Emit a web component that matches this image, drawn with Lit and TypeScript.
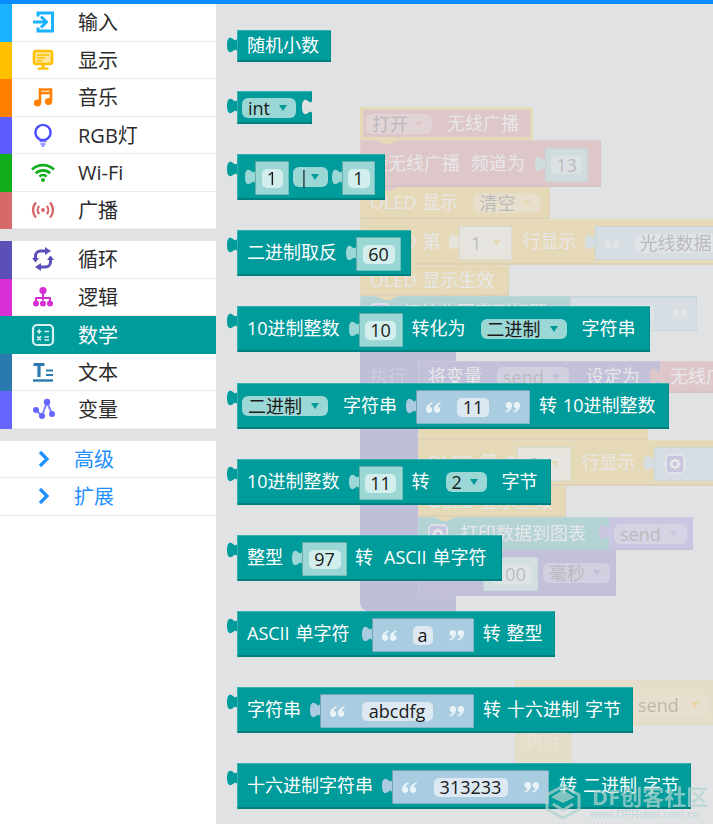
import { LitElement, html, css, svg } from "lit";
import { customElement } from "lit/decorators.js";

type Item =
  | { k: "t"; v: string; g: number }
  | { k: "n"; v: string; g: number; w: number; f: number }
  | { k: "d"; v: string; g: number; w: number }
  | { k: "s"; v: string; g: number; w: number; f: number }
  | { k: "nd"; v: string; g: number; w: number; f: number }
  | { k: "gear"; g: number; tab?: boolean };

interface Block {
  x: number; y: number; w: number; h: number; c: string;
  items: Item[]; notch?: boolean; bump?: boolean; hat?: boolean; tab?: boolean;
}

const OX = 216, OY = 4;
const t = (v: string, g = 10): Item => ({ k: "t", v, g });
const n = (v: string, g: number, w: number, f: number): Item => ({ k: "n", v, g, w, f });
const d = (v: string, g: number, w: number): Item => ({ k: "d", v, g, w });
const s = (v: string, g: number, w: number, f: number): Item => ({ k: "s", v, g, w, f });

const blocks: Block[] = [
  { x: 237, y: 30, w: 94, h: 32, c: "teal", tab: true, items: [t("随机小数")] },
  { x: 237, y: 91, w: 75, h: 33, c: "teal", tab: true, notch: true, items: [d("int", 5, 54)] },
  { x: 237, y: 154, w: 148, h: 46, c: "teal", tab: true, items: [n("1", 8, 34, 21), d("|", 4, 35), n("1", 4, 33, 22)] },
  { x: 237, y: 230, w: 174, h: 46, c: "teal", tab: true, items: [t("二进制取反"), n("60", 9, 45, 32)] },
  { x: 237, y: 306, w: 413, h: 46, c: "teal", tab: true, items: [t("10进制整数"), n("10", 9, 44, 31), t("转化为", 9), d("二进制", 15, 86), t("字符串", 15)] },
  { x: 237, y: 383, w: 432, h: 46, c: "teal", tab: true, items: [d("二进制", 5, 86), t("字符串", 15), s("11", 9, 114, 32), t("转 10进制整数", 9)] },
  { x: 237, y: 459, w: 314, h: 46, c: "teal", tab: true, items: [t("10进制整数"), n("11", 9, 44, 31), t("转", 9), d("2", 16, 41), t("字节", 15)] },
  { x: 237, y: 535, w: 265, h: 46, c: "teal", tab: true, items: [t("整型"), n("97", 9, 45, 32), t("转", 8), t("ASCII 单字符", 11)] },
  { x: 237, y: 611, w: 318, h: 46, c: "teal", tab: true, items: [t("ASCII 单字符"), s("a", 12, 102, 20), t("转 整型", 9)] },
  { x: 237, y: 687, w: 396, h: 46, c: "teal", tab: true, items: [t("字符串"), s("abcdfg", 9, 154, 71), t("转 十六进制 字节", 9)] },
  { x: 237, y: 763, w: 454, h: 46, c: "teal", tab: true, items: [t("十六进制字符串"), s("313233", 9, 157, 74), t("转 二进制 字节", 10)] },
];

const ghosts: Block[] = [
  { x: 360, y: 140, w: 241, h: 47, c: "pink", bump: true, items: [t("设无线广播"), t("频道为", 11), n("13", 10, 43, 31)] },
  { x: 360, y: 107, w: 173, h: 33, c: "pink", hat: true, bump: true, items: [d("打开", 3, 66), t("无线广播", 15)] },
  { x: 360, y: 187, w: 190, h: 32, c: "yellow", bump: true, items: [t("OLED 显示"), d("清空", 15, 67)] },
  { x: 360, y: 219, w: 370, h: 46, c: "yellow", bump: true, items: [t("OLED 第"), { k: "nd", v: "1", g: 9, w: 53, f: 40 }, t("行显示", 10), s("光线数据", 9, 160, 80)] },
  { x: 360, y: 265, w: 149, h: 31, c: "yellow", bump: true, items: [t("OLED 显示生效")] },
  { x: 360, y: 296, w: 337, h: 34, c: "teal", bump: true, items: [{ k: "gear", g: 10 }, t("初始化图表到标题", 13), s("呼吸", 13, 127, 40)] },
  { x: 418, y: 361, w: 242, h: 32, c: "purple", items: [t("将变量"), d("send", 15, 72), t("设定为", 17)] },
  { x: 660, y: 361, w: 70, h: 32, c: "pink", tab: true, items: [t("无线广")] },
  { x: 418, y: 393, w: 230, h: 47, c: "yellow", bump: true, items: [] },
  { x: 418, y: 440, w: 310, h: 46, c: "yellow", bump: true, items: [t("OLED 第"), { k: "nd", v: "2", g: 9, w: 54, f: 40 }, t("行显示", 10), { k: "gear", g: 9, tab: true }] },
  { x: 418, y: 486, w: 148, h: 31, c: "yellow", bump: true, items: [t("OLED 显示生效")] },
  { x: 418, y: 517, w: 191, h: 33, c: "teal", bump: true, items: [{ k: "gear", g: 10 }, t("打印数据到图表", 12)] },
  { x: 609, y: 517, w: 84, h: 33, c: "violet", tab: true, items: [d("send", 5, 73)] },
  { x: 418, y: 550, w: 198, h: 46, c: "purple", bump: true, items: [t("延时"), n("100", 9, 55, 42), d("毫秒", 5, 67)] },
];

const palette: Record<string, string> = { teal: "#009b9b", pink: "#d25f5f", yellow: "#fab90a", purple: "#4a40b0", violet: "#6a5cd8" };

const tabPath = "M10 2C9 4 8 3.500 6 2C3 -.5 0 1 0 8C0 15 3 16.500 6 14C8 12.500 9 12 10 14Z";

const icons: Record<string, unknown> = {
  input: svg`<g fill="none" stroke="#1ab2ff" stroke-width="3"><path d="M7 6.500V3H21.500V21H7V17.500"/><path d="M2 12H15"/><path d="M10 6.500L15.500 12L10 17.500"/></g>`,
  screen: svg`<rect x="3" y="3" width="18" height="13" rx="2" fill="#ffe59a" stroke="#ffc000" stroke-width="2.600"/><path d="M6 7h12M6 10h8M6 13h5" stroke="#ffc000" stroke-width="1.400"/><rect x="10.500" y="16" width="3" height="4" fill="#ffc000"/><rect x="6.500" y="19.500" width="11" height="2.200" fill="#ffc000"/>`,
  music: svg`<path d="M9 18V4.500H20V16" fill="none" stroke="#ff8000" stroke-width="2.600"/><path d="M9 8H20" stroke="#ff8000" stroke-width="2.600"/><circle cx="6.500" cy="18" r="3.600" fill="#ff8000"/><circle cx="17.500" cy="16.500" r="3.600" fill="#ff8000"/>`,
  bulb: svg`<circle cx="12" cy="9.500" r="7.600" fill="none" stroke="#4a4aff" stroke-width="2.400"/><path d="M8.500 18.500h7M9.500 21h5M10.500 23h3" stroke="#7a7aff" stroke-width="1.600"/>`,
  wifi: svg`<g fill="none" stroke="#0fae1a" stroke-width="2.600"><path d="M1 9.500A16 16 0 0 1 23 9.500"/><path d="M4.800 13.200A10.500 10.500 0 0 1 19.200 13.200"/><path d="M8.400 16.600A5.200 5.200 0 0 1 15.600 16.600"/></g><circle cx="12" cy="20" r="2" fill="#0fae1a"/>`,
  radio: svg`<circle cx="12" cy="12" r="1.900" fill="#d66a6a"/><g fill="none" stroke="#d66a6a" stroke-width="2.300"><path d="M8.200 8A6 6 0 0 0 8.200 16"/><path d="M15.800 8A6 6 0 0 1 15.800 16"/><path d="M5 4.500A11 11 0 0 0 5 19.500"/><path d="M19 4.500A11 11 0 0 1 19 19.500"/></g>`,
  loop: svg`<g fill="none" stroke="#5b50b8" stroke-width="3"><path d="M4.500 14V9A5 5 0 0 1 9.500 4H16"/><path d="M19.500 10V15A5 5 0 0 1 14.500 20H8"/></g><path d="M14 0L20 4L14 8ZM10 16L4 20L10 24ZM1 11H8L4.500 15.500ZM16 13H23L19.500 8.500Z" fill="#5b50b8"/>`,
  logic: svg`<circle cx="12" cy="5.500" r="3.600" fill="#d62fd6"/><path d="M12 8V15M5 18V13H19V18" fill="none" stroke="#d62fd6" stroke-width="2"/><circle cx="5" cy="18.500" r="3" fill="#d62fd6"/><circle cx="12" cy="18.500" r="3" fill="#d62fd6"/><circle cx="19" cy="18.500" r="3" fill="#d62fd6"/>`,
  math: svg`<rect x="2" y="2" width="20" height="20" rx="4" fill="none" stroke="#d9f2f1" stroke-width="2.200"/><path d="M6 8.500h4.500M8.200 6.200v4.600M13.500 8.500H18M13.500 14H18M13.500 17H18M6.200 13.400L10 17.200M10 13.400L6.200 17.200" stroke="#d9f2f1" stroke-width="1.600"/>`,
  text: svg`<path d="M2.500 4.500H13.500M8 4.500V17" fill="none" stroke="#2a7ab0" stroke-width="3.200"/><path d="M15 10.500H22M15 15H22" stroke="#2a7ab0" stroke-width="2"/><path d="M2 20.500H22" stroke="#2a7ab0" stroke-width="2.400"/>`,
  vars: svg`<path d="M5 13L11 19L16 5L21 17" fill="none" stroke="#8080ff" stroke-width="2"/><circle cx="5" cy="13" r="3" fill="#6666ff"/><circle cx="11" cy="19" r="3" fill="#6666ff"/><circle cx="16" cy="5" r="3.200" fill="#6666ff"/><circle cx="21" cy="17" r="3" fill="#6666ff"/>`,
  chev: svg`<path d="M9 5L16 12L9 19" fill="none" stroke="#1e90ff" stroke-width="3.200"/>`,
};

const groupA = [
  { l: "输入", i: "input", c: "#1ab2ff" },
  { l: "显示", i: "screen", c: "#ffc000" },
  { l: "音乐", i: "music", c: "#ff8000" },
  { l: "RGB灯", i: "bulb", c: "#5c5cff" },
  { l: "Wi-Fi", i: "wifi", c: "#0fae1a" },
  { l: "广播", i: "radio", c: "#d66a6a" },
];
const groupB = [
  { l: "循环", i: "loop", c: "#5b50b8" },
  { l: "逻辑", i: "logic", c: "#d62fd6" },
  { l: "数学", i: "math", c: "#009b9b", sel: true },
  { l: "文本", i: "text", c: "#2a7ab0" },
  { l: "变量", i: "vars", c: "#6666ff" },
];

@customElement("app-root")
export class AppRoot extends LitElement {
  static styles = css`
    :host { display: block; width: 713px; height: 824px; overflow: hidden; background: #e1e2e4;
      font-family: "Open Sans", "Noto Sans CJK SC", sans-serif; }
    .top { height: 4px; background: #0a8cff; }
    .main { display: flex; height: 820px; }
    .side { width: 216px; flex: none; background: #fff; display: flex; flex-direction: column; }
    .sep { height: 12px; flex: none; background: #e2e2e2; }
    .row { height: 37.500px; flex: none; box-sizing: border-box; display: flex; align-items: stretch;
      border-bottom: 1px solid #ececec; color: #2b2b2b; font-size: 20px; }
    .row.sel { background: #009b9b; color: #fff; border-bottom: 0; }
    .strip { width: 12px; flex: none; margin-bottom: -1px; }
    .icon { width: 24px; height: 24px; margin: auto 24px auto 19px; flex: none; display: block; }
    .label { align-self: center; line-height: 1; margin-top: 2px; margin-left: -1px; }
    .adv { color: #1e90ff; padding-left: 12px; }
    .adv .icon { margin-right: 20px; }
    .canvas { position: relative; flex: 1; overflow: hidden; }
    .ghosts { position: absolute; inset: 0; opacity: 0.2; }
    .ghosts.faint { opacity: 0.12; }
    .shape { position: absolute; background: #3f3aaa; }
    .shape.yel { background: #fab90a; }
    .block { position: absolute; box-sizing: border-box; display: flex; align-items: center;
      color: #fff; font-size: 18px; line-height: 1; white-space: pre; word-spacing: 1.300px;
      background: var(--c); box-shadow: inset 1px 1px 0 rgba(255,255,255,.2), inset 0 -2px 0 rgba(0,0,0,.18), inset -1px 0 0 rgba(0,0,0,.1); }
    .block.bare { background: transparent; box-shadow: none; }
    .tx { margin-bottom: 2px; }
    .teal { --c: #009b9b; --s: #9bd7d4; --f: #d3efed; --a: #009b9b; }
    .pink { --c: #d25f5f; --s: #87c3be; --f: #c8e6e4; --a: #d25f5f; }
    .yellow { --c: #fab90a; --s: #fff0c4; --f: #fff6dc; --a: #fab90a; }
    .purple { --c: #4a40b0; --s: #9bd7d4; --f: #d3efed; --a: #4a40b0; }
    .violet { --c: #6a5cd8; --s: #9bd7d4; --f: #d3efed; --a: #6a5cd8; }
    .pink .dd, .yellow .dd, .purple .dd, .violet .dd, .ghosts .teal .dd { background: #ffffff66; }
    .hat { border: 3px solid #fab90a; box-shadow: none; }
    .tab { position: absolute; left: -10px; top: 7px; width: 10px; height: 16px; display: block; }
    .notch { position: absolute; right: 0; top: 8px; width: 10px; height: 16px; display: block; }
    .bump { position: absolute; left: 16px; bottom: -4px; width: 22px; height: 4px; display: block; z-index: 1; }
    .hat .bump { left: 13px; bottom: -7px; }
    .slot { display: flex; flex: none; align-items: flex-start; margin-top: 2px; }
    .slot .stab { width: 10px; height: 16px; margin-top: 8px; flex: none; display: block; }
    .box { height: 34px; box-sizing: border-box; display: flex; align-items: center; justify-content: center;
      background: var(--s); box-shadow: inset 1px 1px 0 rgba(0,90,90,.35), inset -1px -1px 0 rgba(0,120,120,.25); }
    .box.str { background: #a9cce0; justify-content: space-between; padding: 0 10px; }
    .field { height: 19px; display: flex; align-items: center; justify-content: center;
      border-radius: 5px; background: var(--f); color: #1a1a1a; }
    .field.nd { justify-content: space-between; padding: 0 5px; box-sizing: border-box; }
    .str .field { background: #dde9f2; }
    .dd { height: 20px; box-sizing: border-box; flex: none; display: flex; align-items: center; justify-content: space-between;
      padding: 0 9px 0 6px; border-radius: 6px; background: #9bd7d4; color: #1a1a1a; }
    .dd.big { height: 22px; }
    .arrow { width: 8px; height: 6px; display: block; flex: none; }
    .quote { width: 15px; height: 11px; display: block; flex: none; }
    .gearwrap { display: block; height: 20px; }
    .gear { width: 20px; height: 20px; display: block; flex: none; }
    .gearbox { width: 70px; justify-content: flex-start; padding-left: 11px; background: #a9cce0; }
    .wm { position: absolute; right: 5px; bottom: 3px; width: 163px; height: 38px; color: rgba(178,212,208,.72); }
    .wm-icon { position: absolute; left: 0; top: 2px; width: 36px; height: 34px; display: block; }
    .wm-big { position: absolute; left: 47px; top: 1px; font-size: 22px; font-weight: 700; line-height: 24px; white-space: pre; }
    .wm-small { position: absolute; left: 45px; top: 25px; font-size: 11px; line-height: 13px; white-space: pre; font-family: "Liberation Sans", sans-serif; }
  `;

  private quote(right: boolean) {
    const c = svg`<path d="M6.300 .3C2.500 1.500 0 4.300 0 7.500C0 9.500 1.300 10.900 3.200 10.900C5 10.900 6.400 9.600 6.400 7.800C6.400 6 5.100 4.800 3.400 4.800C3.800 3.500 5 2.200 6.800 1.400Z"/>`;
    return html`<svg class="quote" viewBox="0 0 15 11" fill="#eaf3f8">
      <g transform=${right ? "rotate(180 7.500 5.500)" : ""}>${c}<g transform="translate(8 0)">${c}</g></g>
    </svg>`;
  }

  private arrow() {
    return html`<svg class="arrow" viewBox="0 0 8 6"><path d="M0 0H8L4 6Z" fill="var(--a)"/></svg>`;
  }

  private stab(fill: string) {
    return html`<svg class="stab" viewBox="0 0 10 16"><path d=${tabPath} fill=${fill}/></svg>`;
  }

  private gear() {
    return html`<svg class="gear" viewBox="0 0 20 20">
      <rect x="1" y="1" width="18" height="18" rx="4" fill="#5a50c8" stroke="#fff" stroke-width="1.500"/>
      <circle cx="10" cy="10" r="3.500" fill="none" stroke="#fff" stroke-width="2.500"/>
      <path d="M10 4.500v2M10 13.500v2M4.500 10h2M13.500 10h2M6.100 6.100l1.400 1.400M12.500 12.500l1.400 1.400M13.900 6.100l-1.400 1.400M7.500 12.500l-1.400 1.400" stroke="#fff" stroke-width="1.800"/>
    </svg>`;
  }

  private item(i: Item) {
    const ml = `margin-left:${i.g}px`;
    switch (i.k) {
      case "t":
        return html`<span class="tx" style=${ml}>${i.v}</span>`;
      case "n":
        return html`<span class="slot" style=${ml}>${this.stab("var(--s)")}
          <span class="box" style="width:${i.w}px"><span class="field" style="width:${i.f}px">${i.v}</span></span></span>`;
      case "nd":
        return html`<span class="slot" style=${ml}>${this.stab("var(--s)")}
          <span class="box" style="width:${i.w}px"><span class="field nd" style="width:${i.f}px">${i.v}${this.arrow()}</span></span></span>`;
      case "d":
        return html`<span class="dd" style="${ml};width:${i.w}px">${i.v}${this.arrow()}</span>`;
      case "s":
        return html`<span class="slot" style=${ml}>${this.stab("#a9cce0")}
          <span class="box str" style="width:${i.w}px">${this.quote(false)}<span class="field" style="width:${i.f}px">${i.v}</span>${this.quote(true)}</span></span>`;
      case "gear":
        return i.tab
          ? html`<span class="slot" style=${ml}>${this.stab("#a9cce0")}<span class="box gearbox">${this.gear()}</span></span>`
          : html`<span class="gearwrap" style=${ml}>${this.gear()}</span>`;
    }
  }

  private block(b: Block) {
    return html`<div class="block ${b.c} ${b.hat ? "hat" : ""}"
        style="left:${b.x - OX}px;top:${b.y - OY}px;width:${b.w}px;height:${b.h}px">
      ${b.tab ? html`<svg class="tab" viewBox="0 0 10 16"><path d=${tabPath} fill="var(--c)"/></svg>` : ""}
      ${b.items.map((i) => this.item(i))}
      ${b.notch ? html`<svg class="notch" viewBox="0 0 10 16"><path d=${tabPath} fill="#e1e2e4"/></svg>` : ""}
      ${b.bump ? html`<svg class="bump" viewBox="0 0 22 4"><path d="M0 0L8 4H14L22 0Z" fill=${b.hat ? palette.yellow : palette[b.c]}/></svg>` : ""}
    </div>`;
  }

  private row(r: { l: string; i: string; c: string; sel?: boolean }) {
    return html`<div class="row ${r.sel ? "sel" : ""}">
      <span class="strip" style="background:${r.c}"></span>
      <svg class="icon" viewBox="0 0 24 24">${icons[r.i]}</svg>
      <span class="label">${r.l}</span>
    </div>`;
  }

  private adv(l: string) {
    return html`<div class="row adv"><svg class="icon" viewBox="0 0 24 24">${icons.chev}</svg><span class="label">${l}</span></div>`;
  }

  render() {
    return html`
      <div class="top"></div>
      <div class="main">
        <nav class="side">
          ${groupA.map((r) => this.row(r))}
          <div class="sep"></div>
          ${groupB.map((r) => this.row(r))}
          <div class="sep"></div>
          ${this.adv("高级")}
          ${this.adv("扩展")}
        </nav>
        <div class="canvas">
          <div class="ghosts">
            <div class="shape" style="left:${360 - OX}px;top:${330 - OY}px;width:58px;height:282px;border-radius:0 0 0 10px"></div>
            <div class="shape" style="left:${360 - OX}px;top:${330 - OY}px;width:96px;height:31px"></div>
            <div class="shape" style="left:${400 - OX}px;top:${596 - OY}px;width:56px;height:16px"></div>
            ${ghosts.map((b) => this.block(b))}
          </div>
          <div class="ghosts faint">
            <div class="shape yel" style="left:${515 - OX}px;top:${680 - OY}px;width:198px;height:46px"></div>
            <div class="shape yel" style="left:${515 - OX}px;top:${726 - OY}px;width:57px;height:36px"></div>
          </div>
          <div class="ghosts">
            <div class="block yellow bare" style="left:${515 - OX}px;top:${722 - OY}px;width:57px;height:36px"><span style="margin-left:10px">执行</span></div>
            <div class="block yellow bare" style="left:${632 - OX}px;top:${694 - OY}px;width:76px;height:22px"><span class="dd big" style="width:76px">send${this.arrow()}</span></div>
            <div class="block purple bare" style="left:${370 - OX}px;top:${362 - OY}px;width:40px;height:28px"><span>执行</span></div>
          </div>
          ${blocks.map((b) => this.block(b))}
          <div class="wm">
            <svg class="wm-icon" viewBox="0 0 36 34"><path d="M18 1L34 10V24L18 33L2 24V10Z" fill="none" stroke="currentColor" stroke-width="3"/><path d="M6 12L18 5L30 12L18 18Z" fill="currentColor"/><path d="M8 19L18 25L28 19" fill="none" stroke="currentColor" stroke-width="3"/></svg>
            <span class="wm-big">DF创客社区</span>
            <span class="wm-small">www.DFRobot.com.cn</span>
          </div>
        </div>
      </div>
    `;
  }
}
